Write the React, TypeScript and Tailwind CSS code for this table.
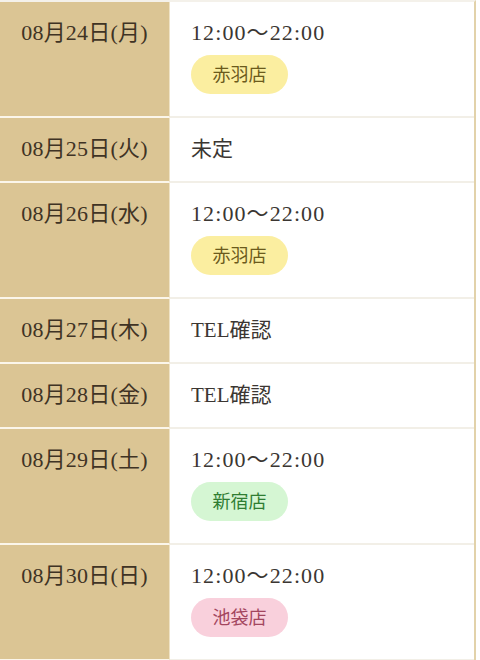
const rows = [
  { date: '08月24日(月)', time: '12:00～22:00', shop: 'akabane' },
  { date: '08月25日(火)', time: '未定' },
  { date: '08月26日(水)', time: '12:00～22:00', shop: 'akabane' },
  { date: '08月27日(木)', time: 'TEL確認' },
  { date: '08月28日(金)', time: 'TEL確認' },
  { date: '08月29日(土)', time: '12:00～22:00', shop: 'shinjuku' },
  { date: '08月30日(日)', time: '12:00～22:00', shop: 'ikebukuro' },
];

const shops: Record<string, { label: string; cls: string }> = {
  akabane: { label: '赤羽店', cls: 'bg-[#fbeea0] text-[#6b5a1c]' },
  shinjuku: { label: '新宿店', cls: 'bg-[#d5f6d3] text-[#2f7d32]' },
  ikebukuro: { label: '池袋店', cls: 'bg-[#f9d0dc] text-[#a3455e]' },
};

export default function App() {
  return (
    <div className="w-[480px] h-[660px] overflow-hidden bg-white font-['Liberation_Serif','Noto_Sans_CJK_JP',serif]">
      <div className="w-[476px] border-r-2 border-[#e2d2aa] border-t-2 border-t-[#f4f1ea]">
        {rows.map((r) => {
          const shop = r.shop ? shops[r.shop] : null;
          const isTime = r.time.includes(':');
          return (
            <div key={r.date} className="flex border-b-2 border-[#f2efe7]">
              <div className="w-[170px] shrink-0 bg-[#dbc594] border-r border-[#efe3c6] -mb-[2px] border-b-2 border-b-[#fbf6ea] pt-[15px] pb-[16px] text-center text-[22px] leading-[32px] text-[#3f3324] tracking-[0.2px]">
                {r.date}
              </div>
              <div className="flex-1 pl-[21px] pt-[15px] pb-[16px] text-[21px] leading-[32px] text-[#3b3632]">
                <div className={isTime ? 'text-[22px] tracking-[1.1px]' : ''}>{r.time}</div>
                {shop && (
                  <div className="mt-[6px] mb-[6px]">
                    <span className={`inline-flex items-center justify-center w-[97px] h-[39px] rounded-full text-[18px] ${shop.cls}`}>
                      {shop.label}
                    </span>
                  </div>
                )}
              </div>
            </div>
          );
        })}
      </div>
    </div>
  );
}
